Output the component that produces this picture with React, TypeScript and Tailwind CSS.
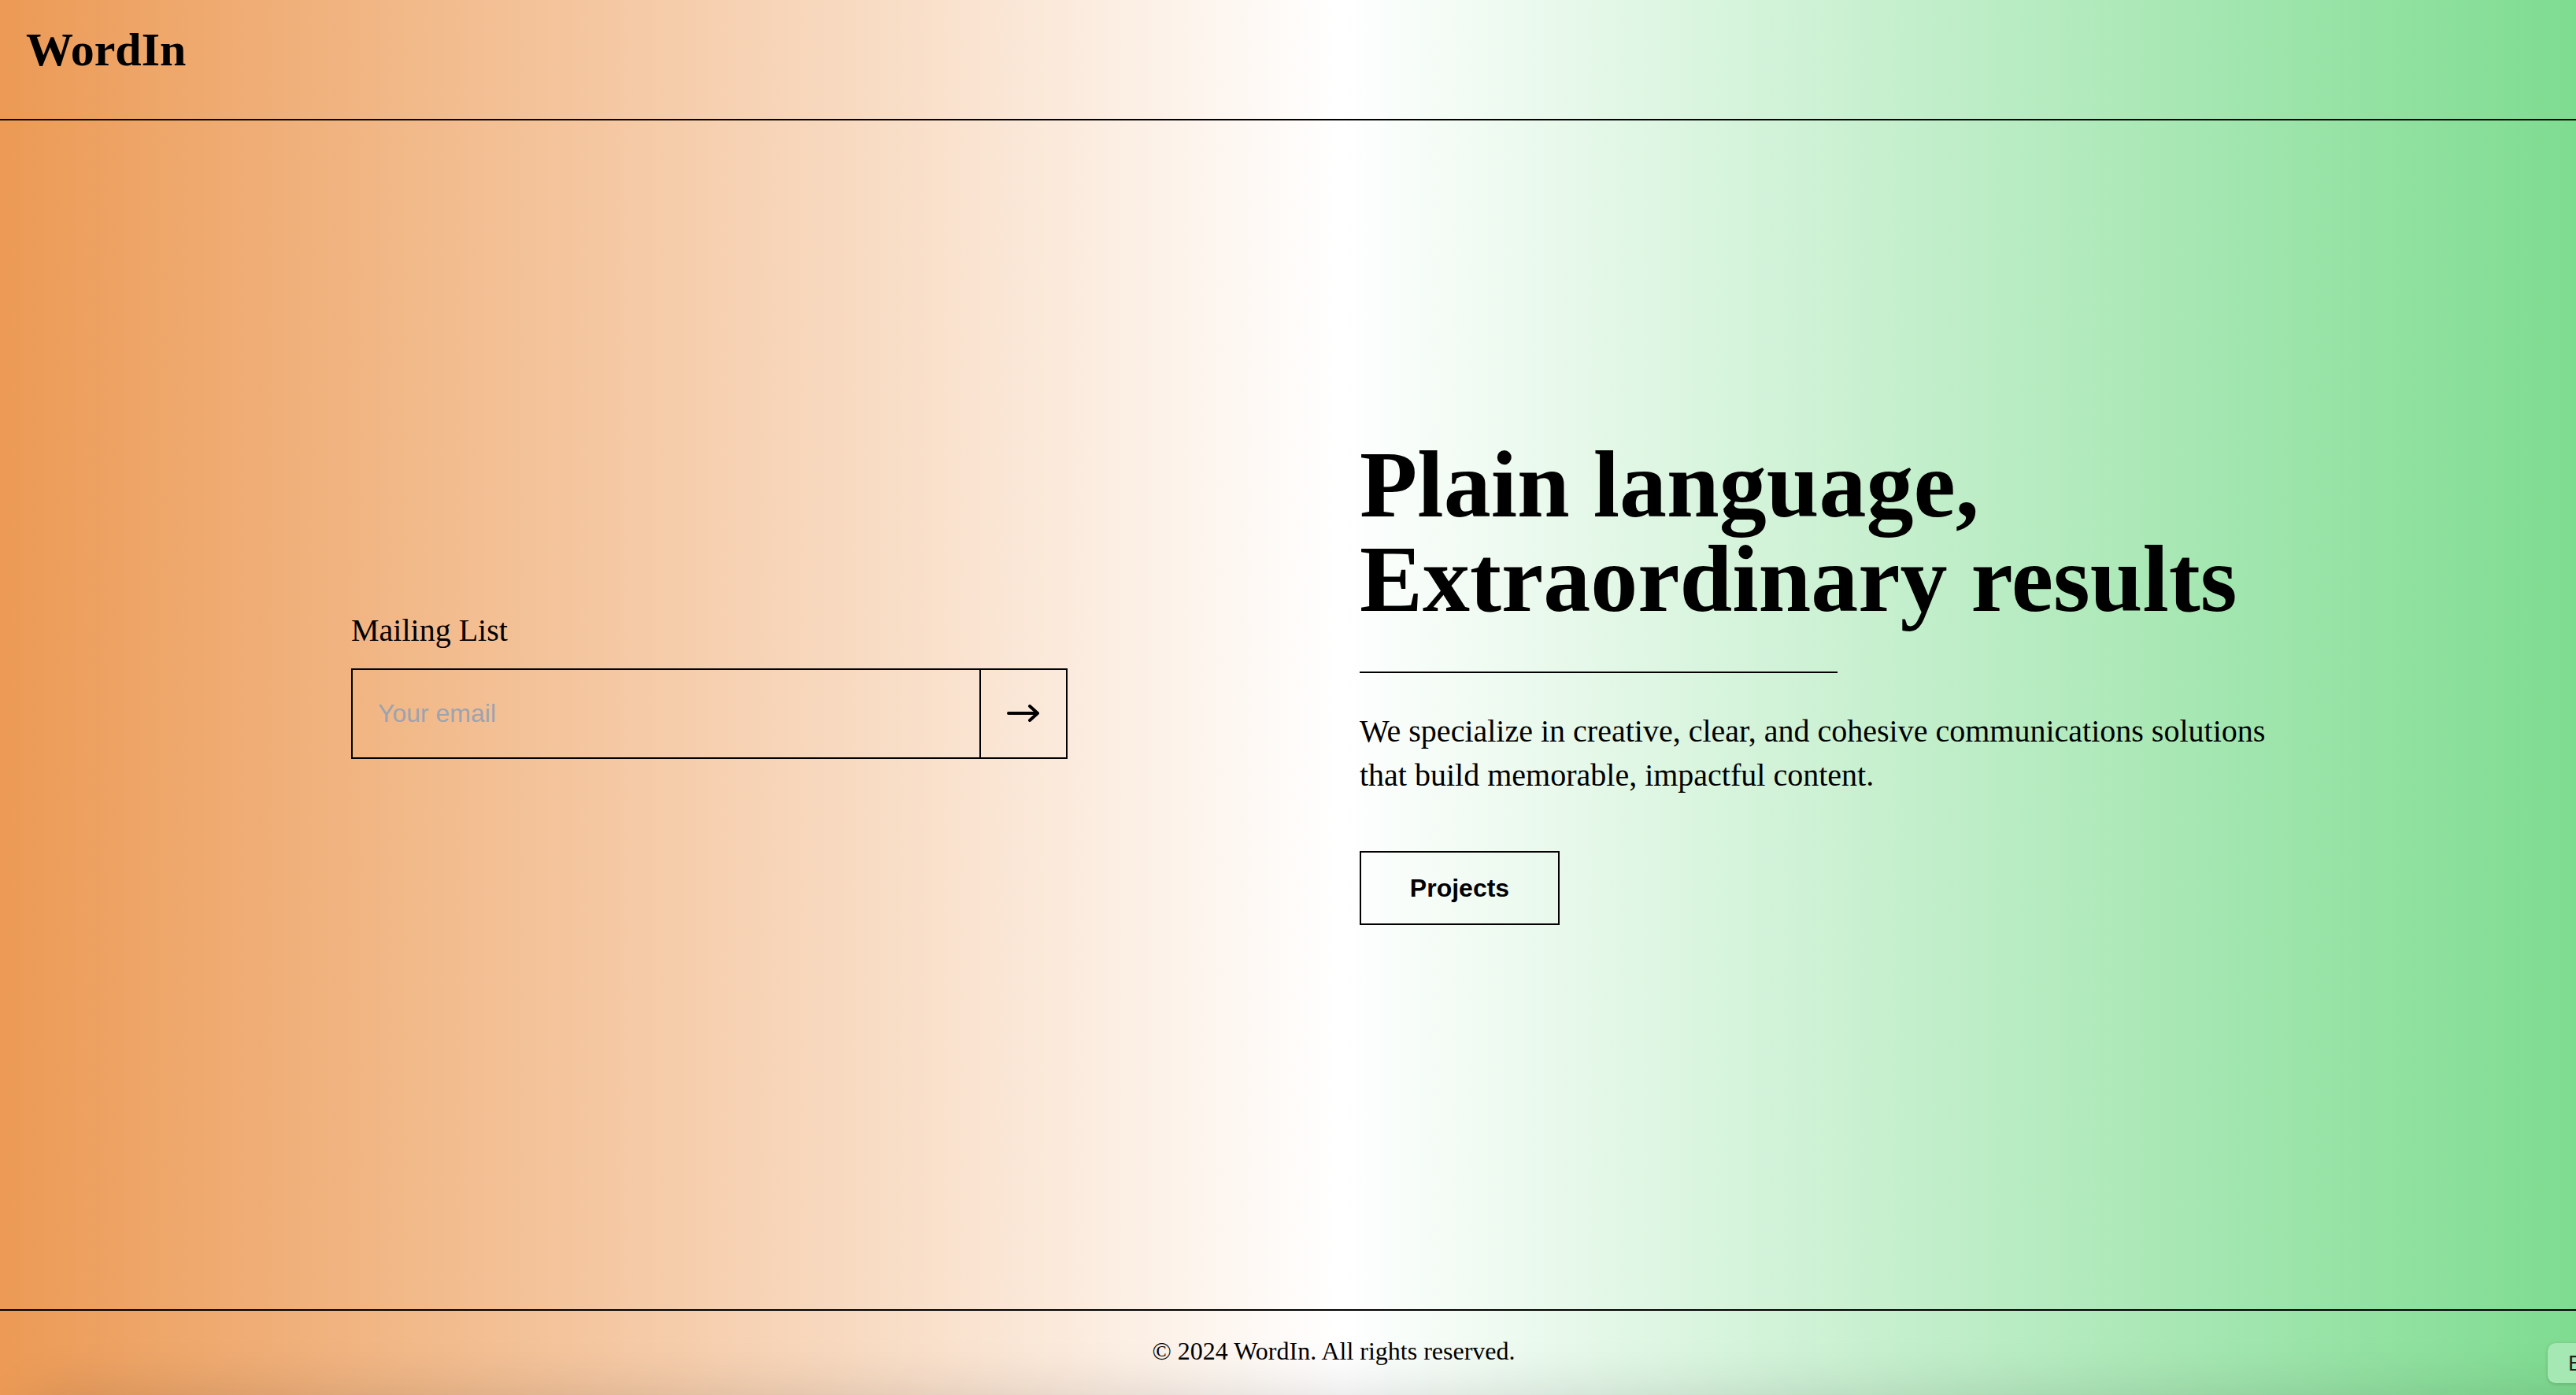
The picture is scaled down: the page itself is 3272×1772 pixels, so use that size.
import { useState } from 'react'

export default function App() {
	const [email, setEmail] = useState('')

	return (
		<div className="relative flex h-[1772px] w-full flex-col overflow-hidden bg-[linear-gradient(to_right,#ec9a55_0%,#ffffff_52%,#7edc90_100%)] font-['Liberation_Serif',serif] text-black">
			{/* Header */}
			<header className="h-[153px] shrink-0 border-b-2 border-black pl-[33px] pt-[27px]">
				<h1 className="text-[60px] font-bold leading-[72px]">WordIn</h1>
			</header>

			{/* Hero */}
			<main className="flex flex-1 items-center pb-[86px] pl-[446px]">
				<div className="mt-[6px] w-[910px] shrink-0">
					<p className="mb-[20px] text-[40px] leading-[56px]">Mailing List</p>
					<form
						onSubmit={(e) => e.preventDefault()}
						className="flex h-[115px] w-[910px] border-2 border-black">
						<input
							type="email"
							value={email}
							onChange={(e) => setEmail(e.target.value)}
							placeholder="Your email"
							className="min-w-0 flex-1 bg-transparent px-[32px] font-['Liberation_Sans',Arial,sans-serif] text-[32px] outline-none placeholder:text-[#9ca3af]"
						/>
						<button
							type="submit"
							className="flex w-[110px] items-center justify-center border-l-2 border-black">
							<svg width="42" height="22" viewBox="0 0 42 22" fill="none">
								<path
									d="M2 11 H39 M29 2 L39 11 L29 20"
									stroke="black"
									strokeWidth="4"
									strokeLinecap="round"
									strokeLinejoin="round"
								/>
							</svg>
						</button>
					</form>
				</div>

				<div className="ml-[371px] w-[1200px] shrink-0">
					<h2 className="text-[120px] font-bold leading-[120px]">
						Plain language,
						<br />
						Extraordinary results
					</h2>
					<div className="mt-[57px] h-[2px] w-[607px] bg-black" />
					<p className="mt-[46px] text-[40px] leading-[56px]">
						We specialize in creative, clear, and cohesive communications solutions that
						build memorable, impactful content.
					</p>
					<button className="mt-[68px] flex h-[94px] w-[254px] items-center justify-center border-2 border-black font-['Liberation_Sans',Arial,sans-serif] text-[32px] font-bold">
						Projects
					</button>
				</div>
			</main>

			{/* Footer */}
			<footer className="flex h-[109px] shrink-0 justify-center border-t-2 border-black pl-[116px] pt-[27px] text-[32px] leading-[48px]">
				© 2024 WordIn. All rights reserved.
			</footer>

			{/* bottom edge shadow */}
			<div className="pointer-events-none absolute left-[60px] right-[-60px] top-[1800px] h-[60px] rounded-[60px] shadow-[0_0_70px_30px_rgba(0,0,0,0.13)]" />

			{/* little floating badge */}
			<div className="absolute right-[-50px] top-[1706px] flex h-[51px] w-[86px] items-center rounded-[10px] bg-[#a6e8b3] pl-[26px] font-['Liberation_Sans',Arial,sans-serif] text-[28px] text-[#222] shadow-[0_1px_4px_rgba(0,0,0,0.2)]">
				E
			</div>
		</div>
	)
}
